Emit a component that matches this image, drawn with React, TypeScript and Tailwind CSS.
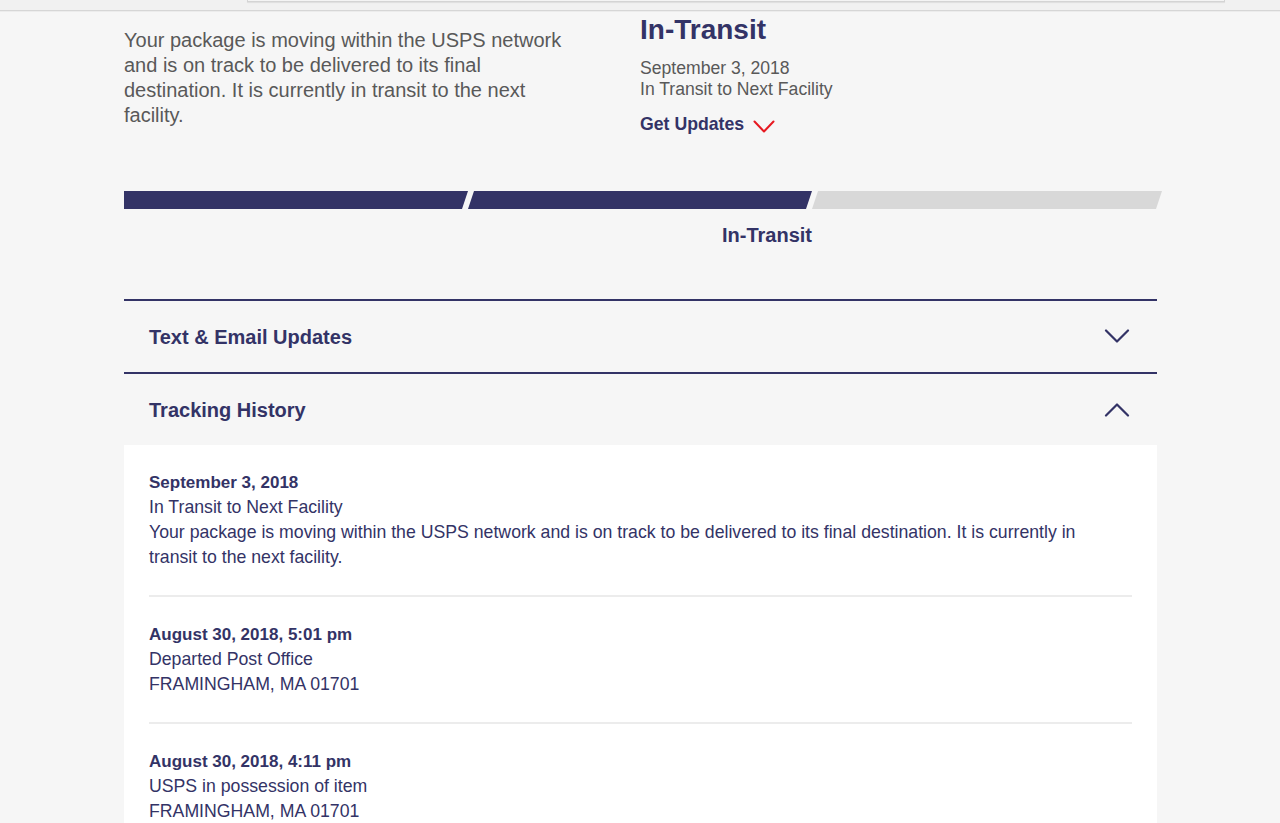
import React from "react";

const Chevron = ({ up = false }: { up?: boolean }) => (
  <svg width="26" height="15" viewBox="0 0 26 15" fill="none">
    <polyline
      points={up ? "2,13.5 13,2.5 24,13.5" : "2,1.5 13,12.5 24,1.5"}
      stroke="#333366"
      strokeWidth="2.2"
      strokeLinecap="round"
      strokeLinejoin="round"
    />
  </svg>
);

const entries = [
  {
    date: "September 3, 2018",
    lines: [
      "In Transit to Next Facility",
      "Your package is moving within the USPS network and is on track to be delivered to its final destination. It is currently in transit to the next facility.",
    ],
  },
  {
    date: "August 30, 2018, 5:01 pm",
    lines: ["Departed Post Office", "FRAMINGHAM, MA 01701"],
  },
  {
    date: "August 30, 2018, 4:11 pm",
    lines: ["USPS in possession of item", "FRAMINGHAM, MA 01701"],
  },
];

export default function App() {
  return (
    <div className="min-h-[823px] bg-[#f6f6f6] font-['Liberation_Sans',Arial,Helvetica,sans-serif]">
      {/* top browser strip */}
      <div className="h-[10px] bg-[#f1f1f1]">
        <div className="ml-[247px] h-[2px] w-[978px] border-x border-b border-[#d4d4d4] bg-[#f4f4f4] shadow-[0_1px_1px_rgba(0,0,0,0.08)]" />
      </div>
      <div className="h-[2px] border-t border-[#d6d6d6] bg-[#ececec]" />

      <div className="ml-[124px] w-[1038px]">
        {/* summary */}
        <div className="flex">
          <div className="w-[516px] pt-[16px]">
            <p className="w-[452px] text-[20px] leading-[25px] text-[#595959]">
              Your package is moving within the USPS network and is on track to be delivered to its final destination. It is currently in transit to the next facility.
            </p>
          </div>
          <div className="pt-[1px]">
            <h1 className="text-[28px] font-bold leading-[34px] text-[#333366]">In-Transit</h1>
            <div className="mt-[11px] text-[17.6px] leading-[21px] text-[#595959]">
              <div>September 3, 2018</div>
              <div>In Transit to Next Facility</div>
            </div>
            <div className="mt-[14px] flex items-center gap-[9px] text-[17.7px] font-bold leading-[21px] text-[#333366]">
              <span>Get Updates</span>
              <svg width="22" height="13" viewBox="0 0 22 13" fill="none" className="mt-[3px]">
                <polyline points="1.5,1.5 11,11.5 20.5,1.5" stroke="#e71921" strokeWidth="2" strokeLinecap="round" strokeLinejoin="round" />
              </svg>
            </div>
          </div>
        </div>

        {/* progress bar */}
        <div className="mt-[56px] flex h-[18px]">
          <div className="w-[344px] bg-[#333366] [clip-path:polygon(0_0,100%_0,calc(100%-6px)_100%,0_100%)]" />
          <div className="w-[344px] bg-[#333366] [clip-path:polygon(6px_0,100%_0,calc(100%-6px)_100%,0_100%)]" />
          <div className="w-[350px] bg-[#d8d8d8] [clip-path:polygon(6px_0,100%_0,calc(100%-6px)_100%,0_100%)]" />
        </div>
        <div className="mt-[14px] flex">
          <div className="w-[344px]" />
          <div className="w-[344px] text-right text-[20px] font-bold leading-[24px] text-[#333366]">In-Transit</div>
        </div>

        {/* accordion */}
        <div className="mt-[52px] w-[1033px]">
          <div className="border-t-2 border-[#333366]">
            <div className="flex h-[71px] items-center justify-between pl-[25px] pr-[27px]">
              <span className="text-[20px] font-bold text-[#333366]">Text &amp; Email Updates</span>
              <Chevron />
            </div>
          </div>
          <div className="border-t-2 border-[#333366]">
            <div className="flex h-[71px] items-center justify-between pl-[25px] pr-[27px]">
              <span className="text-[20px] font-bold text-[#333366]">Tracking History</span>
              <Chevron up />
            </div>
          </div>
          <div className="bg-white px-[25px]">
            {entries.map((e, i) => (
              <div key={i}>
                {i > 0 && <div className="h-[2px] bg-[#ececec]" />}
                <div className="py-[25px] text-[17.7px] leading-[25px] text-[#333366]">
                  <div className="text-[17px] font-bold">{e.date}</div>
                  {e.lines.map((l, j) => (
                    <div key={j} className="max-w-[965px]">{l}</div>
                  ))}
                </div>
              </div>
            ))}
          </div>
        </div>
      </div>
    </div>
  );
}
